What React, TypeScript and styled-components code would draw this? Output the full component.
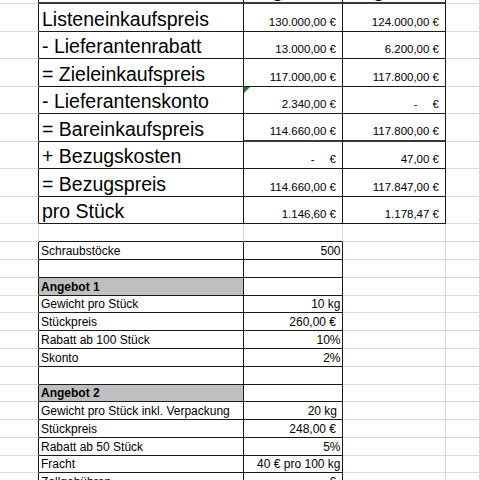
import React from 'react';
import styled, { createGlobalStyle } from 'styled-components';

const GRID = '#d9d9d9';
const LINE = '#1a1a1a';
const THICK = '#3a3a3a';
const COLS = '39px 205px 99px 103px 1fr';

type Kind = 'head' | 'label' | 'amount' | 'small' | 'smallBold';

type Spec = {
  text: string;
  kind: Kind;
  right?: boolean;
  pr?: number;
  dash?: boolean;
  bg?: string;
  flag?: boolean;
};

type RowSpec = {
  h: number;
  tbl: number[];
  thick?: number[];
  cells: Record<number, Spec>;
};

const head = (text: string): Spec => ({ text, kind: 'head' });
const label = (text: string): Spec => ({ text, kind: 'label' });
const money = (text: string, flag?: boolean): Spec => ({ text, kind: 'amount', right: true, pr: 6, flag });
const none = (kind: Kind, pr = 6): Spec => ({ text: '€', kind, right: true, pr, dash: true });
const small = (text: string): Spec => ({ text, kind: 'small' });
const num = (text: string, pr = 1.5): Spec => ({ text, kind: 'small', right: true, pr });
const offer = (text: string): Spec => ({ text, kind: 'smallBold', bg: '#bfbfbf' });

const TOP = [1, 2, 3];
const LOW = [1, 2];

const rows: RowSpec[] = [
  { h: 28, tbl: TOP, thick: TOP, cells: { 2: head('Angebot 1'), 3: head('Angebot 2') } },
  { h: 28, tbl: TOP, cells: { 1: label('Listeneinkaufspreis'), 2: money('130.000,00 €'), 3: money('124.000,00 €') } },
  { h: 27, tbl: TOP, cells: { 1: label('- Lieferantenrabatt'), 2: money('13.000,00 €'), 3: money('6.200,00 €') } },
  { h: 28, tbl: TOP, cells: { 1: label('= Zieleinkaufspreis'), 2: money('117.000,00 €'), 3: money('117.800,00 €') } },
  { h: 27, tbl: TOP, cells: { 1: label('- Lieferantenskonto'), 2: money('2.340,00 €', true), 3: none('amount') } },
  { h: 28, tbl: TOP, thick: [2, 3], cells: { 1: label('= Bareinkaufspreis'), 2: money('114.660,00 €'), 3: money('117.800,00 €') } },
  { h: 27, tbl: TOP, cells: { 1: label('+ Bezugskosten'), 2: none('amount'), 3: money('47,00 €') } },
  { h: 28, tbl: TOP, cells: { 1: label('= Bezugspreis'), 2: money('114.660,00 €'), 3: money('117.847,00 €') } },
  { h: 27, tbl: TOP, cells: { 1: label('pro Stück'), 2: money('1.146,60 €'), 3: money('1.178,47 €') } },
  { h: 18, tbl: [], cells: {} },
  { h: 18, tbl: LOW, cells: { 1: small('Schraubstöcke'), 2: num('500') } },
  { h: 18, tbl: LOW, cells: {} },
  { h: 18, tbl: LOW, cells: { 1: offer('Angebot 1') } },
  { h: 17, tbl: LOW, cells: { 1: small('Gewicht pro Stück'), 2: num('10 kg') } },
  { h: 18, tbl: LOW, cells: { 1: small('Stückpreis'), 2: num('260,00 €', 6) } },
  { h: 18, tbl: LOW, cells: { 1: small('Rabatt ab 100 Stück'), 2: num('10%') } },
  { h: 18, tbl: LOW, cells: { 1: small('Skonto'), 2: num('2%') } },
  { h: 18, tbl: LOW, cells: {} },
  { h: 17, tbl: LOW, cells: { 1: offer('Angebot 2') } },
  { h: 18, tbl: LOW, cells: { 1: small('Gewicht pro Stück inkl. Verpackung'), 2: num('20 kg', 5) } },
  { h: 18, tbl: LOW, cells: { 1: small('Stückpreis'), 2: num('248,00 €', 6) } },
  { h: 18, tbl: LOW, cells: { 1: small('Rabatt ab 50 Stück'), 2: num('5%') } },
  { h: 17, tbl: LOW, cells: { 1: small('Fracht'), 2: num('40 € pro 100 kg') } },
  { h: 18, tbl: LOW, cells: { 1: small('Zollgebühren'), 2: none('small') } },
  { h: 18, tbl: [], cells: {} },
];

const GlobalStyle = createGlobalStyle`
  html, body {
    margin: 0;
    padding: 0;
    background: #fff;
    overflow: hidden;
  }
  body {
    font-family: "Liberation Sans", Arial, sans-serif;
    color: #000;
  }
`;

const Viewport = styled.div`
  width: 480px;
  height: 480px;
  overflow: hidden;
  background: #fff;
`;

const Sheet = styled.div`
  display: flex;
  flex-direction: column;
  margin-top: -24px;
`;

const SheetRow = styled.div<{ $h: number }>`
  display: grid;
  grid-template-columns: ${COLS};
  height: ${(p) => p.$h}px;
`;

const Cell = styled.div<{ $right: string; $bottom: string; $bw: number; $end: boolean; $bg?: string }>`
  position: relative;
  box-sizing: border-box;
  min-width: 0;
  display: flex;
  align-items: flex-end;
  justify-content: ${(p) => (p.$end ? 'flex-end' : 'flex-start')};
  border-right: 1px solid ${(p) => p.$right};
  border-bottom: ${(p) => p.$bw}px solid ${(p) => p.$bottom};
  background: ${(p) => p.$bg ?? '#fff'};
  overflow: hidden;
  white-space: nowrap;
`;

const Flag = styled.span`
  position: absolute;
  top: 0;
  left: 0;
  width: 0;
  height: 0;
  border-top: 6px solid #1f7a35;
  border-right: 6px solid transparent;
`;

const Heading = styled.span`
  flex: 1;
  text-align: center;
  font-size: 19px;
  font-weight: 700;
  line-height: 1.15;
`;

const Label = styled.span`
  font-size: 19.5px;
  line-height: 1.15;
  padding: 0 0 0.5px 3px;
`;

const Amount = styled.span<{ $pr: number }>`
  font-size: 11.5px;
  line-height: 1.15;
  padding: 0 ${(p) => p.$pr}px 2px 0;
`;

const Small = styled.span<{ $pr: number; $bold?: boolean }>`
  font-size: 12px;
  font-weight: ${(p) => (p.$bold ? 700 : 400)};
  line-height: 1.15;
  padding: 0 ${(p) => p.$pr}px 0 2px;
`;

const Dash = styled.span`
  margin-right: 15px;
`;

function Content({ spec }: { spec: Spec }) {
  const body = spec.dash ? (
    <>
      <Dash>-</Dash>€
    </>
  ) : (
    spec.text
  );
  switch (spec.kind) {
    case 'head':
      return <Heading>{body}</Heading>;
    case 'label':
      return <Label>{body}</Label>;
    case 'amount':
      return <Amount $pr={spec.pr ?? 0}>{body}</Amount>;
    case 'smallBold':
      return (
        <Small $pr={0} $bold>
          {body}
        </Small>
      );
    default:
      return <Small $pr={spec.right ? spec.pr ?? 0 : 0}>{body}</Small>;
  }
}

const inTable = (r: number, c: number) => !!rows[r] && rows[r].tbl.includes(c);

export default function App() {
  return (
    <Viewport>
      <GlobalStyle />
      <Sheet>
        {rows.map((row, r) => (
          <SheetRow key={r} $h={row.h}>
            {[0, 1, 2, 3, 4].map((c) => {
              const spec = row.cells[c];
              const mine = inTable(r, c);
              const right = mine || inTable(r, c + 1) ? LINE : GRID;
              const thick = row.thick?.includes(c);
              const bottom = thick ? THICK : mine || inTable(r + 1, c) ? LINE : GRID;
              return (
                <Cell
                  key={c}
                  $right={right}
                  $bottom={bottom}
                  $bw={thick ? 2 : 1}
                  $end={!!spec?.right}
                  $bg={spec?.bg}
                >
                  {spec?.flag && <Flag />}
                  {spec && <Content spec={spec} />}
                </Cell>
              );
            })}
          </SheetRow>
        ))}
      </Sheet>
    </Viewport>
  );
}
